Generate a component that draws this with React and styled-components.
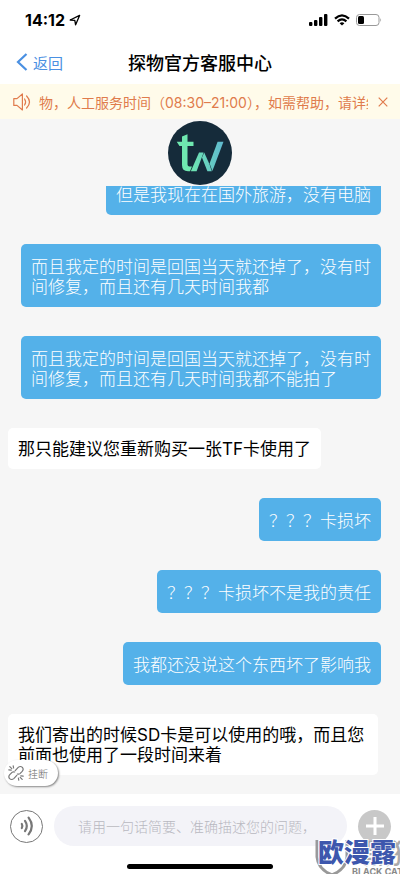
import React, { useState } from "react";
import styled, { createGlobalStyle } from "styled-components";

const messages = [
  { id: 1, mine: true, text: "但是我现在在国外旅游，没有电脑" },
  { id: 2, mine: true, text: "而且我定的时间是回国当天就还掉了，没有时间修复，而且还有几天时间我都" },
  { id: 3, mine: true, text: "而且我定的时间是回国当天就还掉了，没有时间修复，而且还有几天时间我都不能拍了" },
  { id: 4, mine: false, text: "那只能建议您重新购买一张TF卡使用了" },
  { id: 5, mine: true, text: "？？？卡损坏" },
  { id: 6, mine: true, text: "？？？卡损坏不是我的责任" },
  { id: 7, mine: true, text: "我都还没说这个东西坏了影响我" },
  { id: 8, mine: false, text: "我们寄出的时候SD卡是可以使用的哦，而且您前面也使用了一段时间来着" },
];

export default function App() {
  const [showNotice, setShowNotice] = useState(true);
  const [draft, setDraft] = useState("");

  return (
    <>
      <GlobalStyle />
      <Page>
        <StatusBar>
          <Time>
            14:12
            <svg width="12" height="12" viewBox="0 0 12 12">
              <path d="M1.2 6 L10.6 1.4 L6.6 10.8 L5.8 6.3 Z" fill="none" stroke="#000" strokeWidth="1.3" strokeLinejoin="round" />
            </svg>
          </Time>
          <StatusIcons>
            <SignalIcon />
            <WifiIcon />
            <BatteryIcon />
          </StatusIcons>
        </StatusBar>

        <NavBar>
          <BackLink href="#back">
            <svg width="12" height="18" viewBox="0 0 12 18">
              <path d="M10.5 1 L2 9 L10.5 17" fill="none" stroke="#4a90e2" strokeWidth="2.2" />
            </svg>
            返回
          </BackLink>
          <Title>探物官方客服中心</Title>
        </NavBar>

        {showNotice && (
          <Notice>
            <SpeakerIcon />
            <NoticeText>物，人工服务时间（08:30–21:00），如需帮助，请详细描述</NoticeText>
            <CloseButton aria-label="关闭" onClick={() => setShowNotice(false)}>
              <svg width="10" height="10" viewBox="0 0 10 10">
                <path d="M0.7 0.7 L9.3 9.3 M9.3 0.7 L0.7 9.3" stroke="#e07b4c" strokeWidth="1.2" />
              </svg>
            </CloseButton>
          </Notice>
        )}

        <AvatarRow>
          <Avatar />
        </AvatarRow>

        <Chat>
          <MessageList>
            {messages.map((message) => (
              <Message key={message.id} $mine={message.mine}>
                {message.text}
              </Message>
            ))}
          </MessageList>
          <HangUpButton>
            <BrokenLinkIcon />
            挂断
          </HangUpButton>
        </Chat>

        <Footer>
          <InputRow>
            <VoiceButton aria-label="语音">
              <svg width="14" height="20" viewBox="0 0 14 20" fill="none" stroke="#777" strokeWidth="2.2" strokeLinecap="round">
                <path d="M1.8 8 Q3 10 1.8 12" />
                <path d="M5 4.8 Q8.6 10 5 15.2" />
                <path d="M8.6 1.6 Q15 10 8.6 18.4" />
              </svg>
            </VoiceButton>
            <TextInput
              aria-label="问题"
              placeholder="请用一句话简要、准确描述您的问题，"
              value={draft}
              onChange={(e) => setDraft(e.target.value)}
            />
            <AddButton aria-label="更多">
              <svg width="18" height="18" viewBox="0 0 18 18">
                <path d="M9 0 V18 M0 9 H18" stroke="#fff" strokeWidth="3" />
              </svg>
            </AddButton>
          </InputRow>
          <HomeIndicator />
        </Footer>

        <Watermark>
          <Shield />
          <GreyName>黑猫</GreyName>
          <GreyLabel>BLACK CAT</GreyLabel>
          <BlueName>欧漫露</BlueName>
        </Watermark>
      </Page>
    </>
  );
}

const SignalIcon = () => (
  <svg width="19" height="12" viewBox="0 0 19 12">
    <rect x="0" y="8" width="3.4" height="4" rx="1" />
    <rect x="5" y="6" width="3.4" height="6" rx="1" />
    <rect x="10" y="3" width="3.4" height="9" rx="1" />
    <rect x="15" y="0" width="3.4" height="12" rx="1" />
  </svg>
);

const WifiIcon = () => (
  <svg width="16" height="12" viewBox="0 0 16 12" fill="none" stroke="#000" strokeWidth="2.2">
    <path d="M1 4.6 Q8 -2 15 4.6" />
    <path d="M3.6 7.4 Q8 3.4 12.4 7.4" />
    <path d="M8 11.6 L5.6 9.2 Q8 7.4 10.4 9.2 Z" fill="#000" stroke="none" />
  </svg>
);

const BatteryIcon = () => (
  <svg width="26" height="12" viewBox="0 0 26 12">
    <rect x="0.5" y="0.5" width="22.5" height="11" rx="3" fill="none" stroke="#999" />
    <rect x="2" y="2" width="6" height="8" rx="1.5" />
    <path d="M24.3 4 Q26 6 24.3 8 Z" fill="#999" />
  </svg>
);

const SpeakerIcon = () => (
  <svg width="18" height="18" viewBox="0 0 18 18" fill="none" stroke="#e07b4c" strokeWidth="1.2" strokeLinejoin="round">
    <path d="M0.8 5.6 H4 L9.4 1 V17 L4 12.4 H0.8 Z" />
    <path d="M11.6 6 Q13.6 9 11.6 12" strokeLinecap="round" />
    <path d="M13.6 3 Q19.4 9 13.6 15" strokeLinecap="round" />
  </svg>
);

const BrokenLinkIcon = () => (
  <svg width="16" height="16" viewBox="0 0 16 16" fill="none" stroke="#777" strokeWidth="1.2" strokeLinecap="round">
    <path d="M7.2 5.6 L10.2 2.4 Q12.4 0.6 14.4 2.4 Q16 4.4 14.2 6.4 L12 8.6 Q10.8 9.6 9.4 9" />
    <path d="M8.8 10.4 L5.8 13.6 Q3.6 15.4 1.6 13.6 Q0 11.6 1.8 9.6 L4 7.4 Q5.2 6.4 6.6 7" />
    <path d="M5.2 0.8 L5.6 3 M0.8 4.8 L3.2 5.2 M1.8 1.6 L3.8 3.6" />
    <path d="M10.8 15.2 L10.4 13 M15.2 11.2 L12.8 10.8 M14.2 14.4 L12.2 12.4" />
  </svg>
);

const Avatar = () => (
  <svg width="64" height="64" viewBox="0 0 64 64" role="img" aria-label="logo">
    <defs>
      <linearGradient id="logo" gradientUnits="userSpaceOnUse" x1="22" y1="0" x2="56" y2="0">
        <stop offset="0" stopColor="#6fe8b0" />
        <stop offset="1" stopColor="#5fb8d0" />
      </linearGradient>
    </defs>
    <circle cx="32" cy="32" r="32" fill="#152b3a" />
    <path d="M14 15.5 L19.5 13.2 V20.8 H25.5 V25 H19.5 V43.5 Q19.5 45.5 21.5 45.5 H24 L22 50.2 H20 Q14 50.2 14 44 V25 H11.5 L8.7 20.8 H14 Z" fill="#6fe8b0" />
    <g fill="url(#logo)">
      <path d="M22.8 50.2 L31 31.5 H35.6 L28.6 50.2 Z" />
      <path d="M34 36.5 L36.2 31.5 L41.4 43 L43.8 50.2 H39.4 Z" />
      <path d="M41.6 42.5 L49.6 20.8 H55.5 L44.4 50 Z" />
    </g>
  </svg>
);

const Shield = () => (
  <ShieldSvg width="36" height="36" viewBox="0 0 36 36" fill="none" stroke="#999" strokeWidth="3">
    <path d="M2 0 V17 Q3 29 17 35 Q31 29 32 17 V0" />
  </ShieldSvg>
);

const GlobalStyle = createGlobalStyle`
  * {
    box-sizing: border-box;
  }
  body {
    margin: 0;
    background: #fff;
    font-family: Inter, "Noto Sans CJK SC", sans-serif;
  }
  button,
  input {
    font-family: inherit;
    padding: 0;
    border: none;
  }
  svg {
    display: block;
    flex-shrink: 0;
  }
`;

const Page = styled.div`
  position: relative;
  display: flex;
  flex-direction: column;
  height: 100vh;
  overflow: hidden;
`;

const StatusBar = styled.div`
  display: flex;
  align-items: center;
  justify-content: space-between;
  height: 40px;
  padding: 0 18px 0 25px;
`;

const Time = styled.div`
  display: flex;
  align-items: center;
  gap: 4px;
  font-size: 16px;
  font-weight: 700;
`;

const StatusIcons = styled.div`
  display: flex;
  align-items: center;
  gap: 6px;
`;

const NavBar = styled.header`
  display: grid;
  grid-template-columns: 1fr auto 1fr;
  align-items: center;
  height: 44px;
  padding: 0 16px;
`;

const BackLink = styled.a`
  display: flex;
  align-items: center;
  gap: 5px;
  font-size: 15px;
  color: #4a90e2;
  text-decoration: none;
`;

const Title = styled.h1`
  margin: 0;
  font-size: 18px;
  font-weight: 500;
  color: #000;
`;

const Notice = styled.div`
  display: flex;
  align-items: center;
  height: 35px;
  padding: 0 12px 0 13px;
  background: #fffbea;
  color: #e07b4c;
`;

const NoticeText = styled.div`
  flex: 1;
  margin: 0 10px 0 8px;
  overflow: hidden;
  white-space: nowrap;
  font-size: 14px;
`;

const CloseButton = styled.button`
  background: none;
  color: inherit;
  cursor: pointer;
`;

const AvatarRow = styled.div`
  display: flex;
  justify-content: center;
  height: 67px;
  padding-top: 2px;
  background: #f6f6f6;
`;

const Chat = styled.main`
  position: relative;
  flex: 1;
  min-height: 0;
  background: #f6f6f6;
`;

const MessageList = styled.div`
  display: flex;
  flex-direction: column;
  justify-content: flex-end;
  gap: 29px;
  height: 100%;
  padding: 0 19px 19px 8px;
  overflow: hidden;
`;

const Message = styled.div`
  flex-shrink: 0;
  align-self: ${(props) => (props.$mine ? "flex-end" : "flex-start")};
  max-width: ${(props) => (props.$mine ? "360px" : "370px")};
  padding: ${(props) => (props.$mine ? "13px 10px 10px" : "11px 10px 10px")};
  border-radius: 5px;
  background: ${(props) => (props.$mine ? "#54b1e9" : "#fff")};
  color: ${(props) => (props.$mine ? "#fff" : "#000")};
  font-size: 17px;
  font-weight: ${(props) => (props.$mine ? 300 : 400)};
  line-height: 20px;
`;

const HangUpButton = styled.button`
  position: absolute;
  left: 4px;
  bottom: 8px;
  display: flex;
  align-items: center;
  gap: 4px;
  height: 26px;
  padding: 0 10px 0 4px;
  border-radius: 13px;
  background: #fff;
  box-shadow: 1px 1px 2px #888;
  color: #666;
  font-size: 10px;
  font-weight: 300;
  cursor: pointer;
`;

const Footer = styled.footer`
  display: flex;
  flex-direction: column;
  align-items: center;
  height: 80px;
  background: #fff;
`;

const InputRow = styled.div`
  display: flex;
  align-items: center;
  align-self: stretch;
  gap: 11px;
  height: 64px;
  padding: 0 9px 0 10px;
`;

const RoundButton = styled.button`
  display: flex;
  align-items: center;
  justify-content: center;
  flex-shrink: 0;
  width: 33px;
  height: 33px;
  border-radius: 50%;
  cursor: pointer;
`;

const VoiceButton = styled(RoundButton)`
  border: 1px solid #777;
  background: #fff;
`;

const AddButton = styled(RoundButton)`
  background: #c8c8c8;
`;

const TextInput = styled.input`
  flex: 1;
  min-width: 0;
  height: 40px;
  padding: 0 24px;
  border-radius: 20px;
  background: #f3f3f8;
  font-size: 14px;
  font-weight: 300;
  &::placeholder {
    color: #b8b8c0;
  }
`;

const HomeIndicator = styled.div`
  width: 146px;
  height: 5px;
  margin-top: 6px;
  border-radius: 3px;
  background: #000;
`;

// brand mark laid over the bottom right corner
const Watermark = styled.div`
  position: absolute;
  right: 0;
  bottom: 0;
  width: 85px;
  height: 36px;
  overflow: hidden;
  white-space: nowrap;
  pointer-events: none;
`;

const ShieldSvg = styled.svg`
  position: absolute;
  left: 0;
  top: 2px;
`;

const GreyName = styled.span`
  position: absolute;
  left: 48px;
  top: 2px;
  font-size: 28px;
  font-weight: 500;
  line-height: 28px;
  color: #aaa;
`;

const GreyLabel = styled.span`
  position: absolute;
  left: 37px;
  top: 28px;
  font-size: 9px;
  font-weight: 700;
  line-height: 12px;
  color: #888;
`;

const BlueName = styled.span`
  position: absolute;
  left: 3px;
  top: 1px;
  font-size: 26px;
  font-weight: 900;
  line-height: 28px;
  color: #3d57ad;
  -webkit-text-stroke: 2px #fff;
  paint-order: stroke fill;
`;
